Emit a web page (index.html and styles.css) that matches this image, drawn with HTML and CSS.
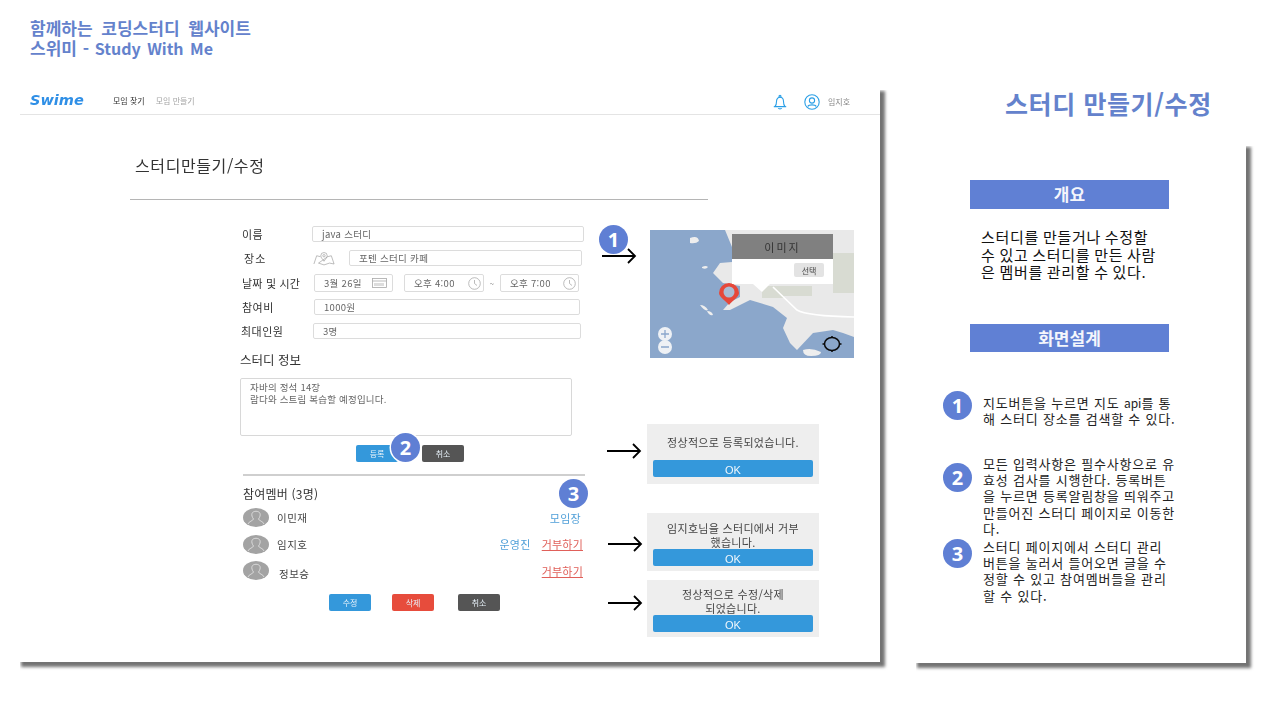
FILE: index.html
```html
<!DOCTYPE html>
<html lang="ko">
<head>
<meta charset="utf-8">
<title>스터디 만들기/수정</title>
<link rel="stylesheet" href="styles.css">
</head>
<body>
<div class="slide">
  <h1 class="slide-title">함께하는 코딩스터디 웹사이트<br><span class="line-two">스위미 - <span class="latin">Study With Me</span></span></h1>

  <section class="card mock-card">
    <div class="mock">
      <header class="nav">
        <span class="logo">Swime</span>
        <span class="nav-link active">모임 찾기</span>
        <span class="nav-link">모임 만들기</span>
        <svg class="bell" width="16" height="16" viewBox="0 0 16 16" fill="none" stroke="#2b9fe6" stroke-width="1.1"><path d="M3 12.500c1-1 1.500-2.500 1.500-5C4.500 5 6 3.300 8 3.300S11.500 5 11.500 7.500c0 2.500.5 4 1.500 5z"/><circle cx="8" cy="2.300" r="1"/><path d="M1.800 12.700h12.400M6.200 14.300c.5.700 3.100.7 3.600 0"/></svg>
        <svg class="user" width="16" height="16" viewBox="0 0 16 16" fill="none" stroke="#2b9fe6" stroke-width="1.100"><circle cx="8" cy="8" r="7.200"/><circle cx="8" cy="6.500" r="2.600"/><path d="M3.800 12.500c1-2.200 7.400-2.200 8.400 0"/></svg>
        <span class="nav-user">임지호</span>
      </header>

      <h2 class="page-title">스터디만들기/수정</h2>
      <hr class="page-rule">

      <form class="form">
        <div class="row row-name"><span class="label">이름</span><span class="field grow">java 스터디</span></div>
        <div class="row row-place"><span class="label">장소</span>
          <svg class="map-ico" width="22" height="15" viewBox="0 0 24 16" fill="none" stroke="#9a9a9a" stroke-width=".7"><path d="M1 14l3-9 4 1M16 6l4-1 3 9-5-1-6 2-6-2z"/><path d="M12 11c-2-3-3.500-4-3.500-6a3.500 3.500 0 0 1 7 0c0 2-1.500 3-3.500 6z"/><circle cx="12" cy="5" r="1.300"/></svg>
          <span class="field grow">포텐 스터디 카페</span></div>
        <div class="row row-date"><span class="label">날짜 및 시간</span>
          <span class="field date">3월 26일
            <svg width="15" height="10" viewBox="0 0 15 10" fill="none" stroke="#a9a9a9" stroke-width=".8"><rect x=".5" y=".5" width="14" height="9"/><path d="M.5 3h14M3 5v3M5 5v3M7 5v3M9 5v3M11 5v3"/></svg></span>
          <span class="field time">오후 4:00
            <svg width="13" height="13" viewBox="0 0 13 13" fill="none" stroke="#a9a9a9" stroke-width=".8"><circle cx="6.500" cy="6.500" r="5.800"/><path d="M6.500 3v3.500l2.500 2"/></svg></span>
          <span class="tilde">~</span>
          <span class="field time">오후 7:00
            <svg width="13" height="13" viewBox="0 0 13 13" fill="none" stroke="#a9a9a9" stroke-width=".8"><circle cx="6.500" cy="6.500" r="5.800"/><path d="M6.500 3v3.500l2.500 2"/></svg></span>
        </div>
        <div class="row row-fee"><span class="label">참여비</span><span class="field grow">1000원</span></div>
        <div class="row row-max"><span class="label">최대인원</span><span class="field grow">3명</span></div>

        <h3 class="sub info-title">스터디 정보</h3>
        <div class="textarea">자바의 정석 14장<br>람다와 스트림 복습할 예정입니다.</div>

        <div class="btns btns-top">
          <span class="btn blue">등록</span>
          <span class="btn dark">취소</span>
        </div>
        <hr class="rule">

        <h3 class="sub members-title">참여멤버 (3명)</h3>
        <ul class="members">
          <li class="member">
            <svg class="avatar" width="26" height="19" viewBox="0 0 26 19"><ellipse cx="13" cy="9.500" rx="13" ry="9.500" fill="#a3a3a3"/><path d="M5 16c1-3 5-3 5.500-5C9 9 8.500 7 9 5.500c1-3 7-3 8 0 .5 1.500 0 3.500-1.500 5.500.5 2 4.500 2 5.500 5" fill="none" stroke="#e6e6e6" stroke-width=".8"/></svg>
            <span class="name">이민재</span><span class="role">모임장</span>
          </li>
          <li class="member">
            <svg class="avatar" width="26" height="19" viewBox="0 0 26 19"><ellipse cx="13" cy="9.500" rx="13" ry="9.500" fill="#a3a3a3"/><path d="M5 16c1-3 5-3 5.500-5C9 9 8.500 7 9 5.500c1-3 7-3 8 0 .5 1.500 0 3.500-1.500 5.500.5 2 4.500 2 5.500 5" fill="none" stroke="#e6e6e6" stroke-width=".8"/></svg>
            <span class="name">임지호</span><span class="role">운영진</span><span class="reject">거부하기</span>
          </li>
          <li class="member">
            <svg class="avatar" width="26" height="19" viewBox="0 0 26 19"><ellipse cx="13" cy="9.500" rx="13" ry="9.500" fill="#a3a3a3"/><path d="M5 16c1-3 5-3 5.500-5C9 9 8.500 7 9 5.500c1-3 7-3 8 0 .5 1.500 0 3.500-1.500 5.500.5 2 4.500 2 5.500 5" fill="none" stroke="#e6e6e6" stroke-width=".8"/></svg>
            <span class="name name-low">정보승</span><span class="reject">거부하기</span>
          </li>
        </ul>
        <div class="btns btns-bottom">
          <span class="btn blue">수정</span>
          <span class="btn red">삭제</span>
          <span class="btn dark">취소</span>
        </div>
      </form>
    </div>
  </section>

  <div class="map">
    <svg width="204" height="128" viewBox="0 0 204 128">
      <rect width="204" height="128" fill="#8ba7cb"/>
      <path d="M75 0l7 17v15l-12 1-7 10 10 10 17 3v11l-10 5-7 8 7 0 20-10 23 7 14 11-4 10 7 15 7 7 16-17 20-3 10 3 11 4V0z" fill="#e9e9e9"/>
      <path d="M183 23h21v40h-21zM112 56h22v12h-22zM134 56h28v10h-28z" fill="#d8dbd2"/>
      <path d="M123 57l24 23q10 6 57 7" fill="none" stroke="#fff" stroke-width="1.600"/>
      <path d="M40 8q8-3 9 3q-3 3-9 2zM52 37q4-2 6 0q-2 3-6 1zM50 75q5 0 8 5q-3 2-8-5zM57 81q5 0 6 4q-4 1-6-4zM153 120q8-3 18 2q0 4-10 4q-8 0-8-6z" fill="#eeeeee"/>
      <circle cx="15" cy="104" r="7" fill="#eef1f5"/><circle cx="15" cy="117" r="7" fill="#eef1f5"/>
      <path d="M11 104h8M15 100v8M11 117h8" stroke="#8ba7cb" stroke-width="1.300"/>
      <ellipse cx="182" cy="114" rx="7.500" ry="6.500" fill="none" stroke="#0a0a0a" stroke-width="1.500"/>
      <path d="M182 106v2M182 120v2M172.500 114h2M189.500 114h2" stroke="#0a0a0a" stroke-width="1.500"/>
      <path d="M79 75c-3-4-10-8-10-12a10 10 0 0 1 20 0c0 4-7 8-10 12z" fill="#e6483a"/>
      <circle cx="79" cy="62" r="5.500" fill="#a9bcd4"/>
      <path d="M103 54h17l-8 8z" fill="#fff"/>
    </svg>
    <div class="popup">
      <div class="popup-head">이미지</div>
      <div class="popup-body"><span class="popup-btn">선택</span></div>
    </div>
  </div>

  <div class="alert alert-a"><p>정상적으로 등록되었습니다.</p><span class="ok">OK</span></div>
  <div class="alert alert-b"><p>임지호님을 스터디에서 거부<br>했습니다.</p><span class="ok">OK</span></div>
  <div class="alert alert-c"><p>정상적으로 수정/삭제<br>되었습니다.</p><span class="ok">OK</span></div>

  <svg class="arrow arrow-1" width="36" height="16" viewBox="0 0 36 16" fill="none" stroke="#000" stroke-width="1.800"><path d="M1 8h33M27 1l7 7-7 7"/></svg>
  <svg class="arrow arrow-2" width="36" height="16" viewBox="0 0 36 16" fill="none" stroke="#000" stroke-width="1.800"><path d="M1 8h33M27 1l7 7-7 7"/></svg>
  <svg class="arrow arrow-3" width="36" height="16" viewBox="0 0 36 16" fill="none" stroke="#000" stroke-width="1.800"><path d="M1 8h33M27 1l7 7-7 7"/></svg>
  <svg class="arrow arrow-4" width="36" height="16" viewBox="0 0 36 16" fill="none" stroke="#000" stroke-width="1.800"><path d="M1 8h33M27 1l7 7-7 7"/></svg>

  <span class="badge pin-1">1</span>
  <span class="badge pin-2">2</span>
  <span class="badge pin-3">3</span>

  <h2 class="side-title">스터디 만들기/수정</h2>

  <aside class="card side-card">
    <h3 class="bar bar-one">개요</h3>
    <p class="summary">스터디를 만들거나 수정할<br>수 있고 스터디를 만든 사람<br>은 멤버를 관리할 수 있다.</p>
    <h3 class="bar bar-two">화면설계</h3>
    <div class="note note-1"><span class="badge">1</span><p>지도버튼을 누르면 지도 <span class="api">api</span>를 통<br>해 스터디 장소를 검색할 수 있다.</p></div>
    <div class="note note-2"><span class="badge">2</span><p>모든 입력사항은 필수사항으로 유<br>효성 검사를 시행한다. 등록버튼<br>을 누르면 등록알림창을 띄워주고<br>만들어진 스터디 페이지로 이동한<br>다.</p></div>
    <div class="note note-3"><span class="badge">3</span><p>스터디 페이지에서 스터디 관리<br>버튼을 눌러서 들어오면 글을 수<br>정할 수 있고 참여멤버들을 관리<br>할 수 있다.</p></div>
  </aside>
</div>
</body>
</html>
```

FILE: styles.css
```css
* { box-sizing: border-box; }
html, body { margin: 0; padding: 0; background: #fff; }
body { font-family: "Noto Sans CJK KR", "Noto Sans", sans-serif; color: #333; }
.slide { position: relative; width: 1280px; height: 720px; overflow: hidden; background: #fff; }
h1, h2, h3, p, ul { margin: 0; padding: 0; font-weight: 400; }
hr { border: 0; margin: 0; }
ul { list-style: none; }

.slide-title { position: absolute; left: 30px; top: 18px; font-size: 17px; line-height: 20px; font-weight: 700; color: #6482cc; word-spacing: 4px; white-space: nowrap; }
.line-two { word-spacing: 1px; }
.latin { font-size: 16px; word-spacing: 2px; }

.card { position: absolute; background: #fff; box-shadow: 3px 3px 3px 2px rgba(0,0,0,.55); clip-path: inset(0 -12px -12px 0); }
.mock-card { left: 20px; top: 90px; width: 860px; height: 572px; }
.mock { height: 100%; filter: blur(.35px); }

.nav { display: flex; align-items: center; height: 25px; padding: 0 30px 0 10px; border-bottom: 1px solid #e4e4e4; }
.logo { width: 83px; padding-bottom: 4px; font: italic 700 14.500px "DejaVu Sans", sans-serif; color: #2f8fe6; }
.nav-link { padding-bottom: 3px; font-size: 8px; color: #a5a5a5; margin-right: 11px; }
.nav-link.active { color: #333; }
.bell { margin-left: auto; }
.user { margin-left: 16px; }
.nav-user { margin-left: 8px; padding-bottom: 1px; font-size: 8px; color: #888; }

.page-title { margin: 40px 0 0 115px; font-size: 16px; line-height: 20px; letter-spacing: .6px; color: #333; }
.page-rule { margin: 24px 0 0 110px; width: 578px; height: 1px; background: #b5b5b5; }

.form { margin: 26px 0 0 220px; width: 346px; }
.row { display: flex; align-items: center; height: 16px; margin-bottom: 8px; }
.label { font-size: 11px; color: #333; letter-spacing: .5px; white-space: nowrap; }
.field { display: flex; align-items: center; height: 100%; padding-left: 9px; border: 1px solid #dcdcdc; border-radius: 2px; font-size: 9.500px; letter-spacing: .3px; color: #666; white-space: nowrap; }
.grow { flex: 1; }
.row-name { padding: 0 2px; }
.row-name .label { width: 70px; }
.row-place { padding: 0 4px 0 4px; }
.row-place .label { width: 69px; letter-spacing: 1.200px; }
.map-ico { margin-right: 14px; }
.row-date { height: 18px; margin-bottom: 7px; padding: 0 6px 0 2px; }
.row-date .label { width: 72px; letter-spacing: .2px; }
.date { width: 79px; justify-content: space-between; padding: 0 5px 0 9px; }
.time { width: 80px; margin-left: 11px; justify-content: space-between; padding: 0 2px 0 9px; }
.time + .tilde + .time { margin-left: 0; width: 79px; }
.tilde { width: 16px; text-align: center; font-size: 8px; color: #666; }
.row-fee { padding: 0 6px 0 2px; }
.row-fee .label { width: 72px; }
.row-max { padding: 0 5px 0 1px; }
.row-max .label { width: 72px; }

.sub { font-size: 11px; line-height: 16px; color: #333; }
.info-title { margin-top: 13px; font-size: 12.500px; }
.textarea { margin-top: 10px; width: 332px; height: 58px; padding: 2px 9px; border: 1px solid #d8d8d8; border-radius: 2px; font-size: 9.500px; letter-spacing: .2px; line-height: 12px; color: #666; }

.btns { display: flex; }
.btn { display: flex; align-items: center; justify-content: center; width: 42px; height: 17px; border-radius: 2px; font-size: 8px; color: #e8f2fa; }
.blue { background: #3498db; }
.dark { background: #555; }
.red { background: #e74c3c; }
.btns-top { margin: 9px 0 0 116px; gap: 24px; }
.rule { margin: 12px 0 0 3px; width: 342px; height: 2px; background: #cfcfcf; }
.members-title { margin: 10px 0 0 3px; font-size: 12px; letter-spacing: .2px; }
.members { margin: 6px 0 0 3px; width: 340px; }
.member { display: flex; align-items: center; height: 19px; margin-bottom: 7.500px; }
.member:last-child { margin-bottom: 0; }
.avatar { flex: none; }
.name { margin-left: 8px; font-size: 10.500px; letter-spacing: .5px; color: #444; }
.name-low { margin-left: 10px; padding-top: 6px; }
.role { margin-left: auto; font-size: 11px; letter-spacing: .3px; color: #4f9fd8; }
.role:last-child { margin-right: 2px; }
.reject { margin-left: 11px; font-size: 11px; letter-spacing: .2px; color: #e0605a; text-decoration: underline; }
.member:last-child .reject { margin-left: auto; }
.btns-bottom { margin: 14px 0 0 89px; }
.btns-bottom .red { margin: 0 24px 0 21px; }

.map { position: absolute; left: 650px; top: 230px; width: 204px; height: 128px; filter: blur(.35px); }
.map svg { display: block; }
.popup { position: absolute; left: 82px; top: 4px; width: 101px; height: 50px; background: #fff; }
.popup-head { display: flex; align-items: center; justify-content: center; height: 25px; background: #808080; font-size: 11px; letter-spacing: 2px; color: #333; }
.popup-body { display: flex; justify-content: flex-end; padding: 4px 9px 0 0; }
.popup-btn { display: flex; align-items: center; justify-content: center; width: 30px; height: 14px; border-radius: 2px; background: #e3e3e3; font-size: 8px; color: #444; }

.alert { position: absolute; left: 647px; width: 172px; padding: 0 6px; background: #eee; text-align: center; filter: blur(.3px); white-space: nowrap; }
.alert p { font-size: 11px; line-height: 14px; letter-spacing: .3px; color: #444; }
.alert-a { top: 424px; height: 60px; padding-top: 11px; }
.alert-a p { margin-bottom: 11px; }
.alert-b { top: 513px; height: 58px; padding-top: 8px; }
.alert-c { top: 580px; height: 57px; padding-top: 7px; }
.ok { display: block; height: 17px; border-radius: 2px; background: #3498db; font: 11px/21px "Liberation Sans", sans-serif; color: #eef6fc; }

.arrow { position: absolute; }
.arrow-1 { left: 601px; top: 248px; }
.arrow-2 { left: 606px; top: 443px; }
.arrow-3 { left: 607px; top: 536px; }
.arrow-4 { left: 607px; top: 595px; }

.badge { display: flex; align-items: center; justify-content: center; flex: none; width: 29px; height: 29px; border-radius: 50%; background: #5f7fd4; color: #fff; font: 700 20px "Open Sans", sans-serif; }
.pin-1, .pin-2, .pin-3 { position: absolute; }
.pin-1 { left: 599px; top: 225px; }
.pin-2 { left: 391px; top: 433px; box-shadow: 0 0 0 1.500px #fff; }
.pin-3 { left: 559px; top: 479px; }

.side-title { position: absolute; left: 1005px; top: 87px; font-size: 25px; line-height: 32px; letter-spacing: .6px; font-weight: 700; color: #6482cc; white-space: nowrap; }
.side-card { left: 916px; top: 146px; width: 330px; height: 517px; padding: 34px 0 0 54px; }
.bar { display: flex; align-items: center; justify-content: center; width: 199px; height: 29px; background: #6080d4; font-size: 17px; font-weight: 700; color: #f4f6fc; }
.bar-one { padding-bottom: 2px; }
.bar-two { height: 28px; }
.summary { margin: 19px 0 43px 11px; font-size: 15px; line-height: 17.500px; letter-spacing: .7px; word-spacing: -1px; color: #111; white-space: nowrap; }
.note { display: flex; margin-left: -27px; white-space: nowrap; }
.note p { margin-left: 11px; font-size: 13px; line-height: 16.200px; letter-spacing: .8px; color: #222; }
.api { font-size: 12px; letter-spacing: 0; }
.note-1 { margin-top: 43px; }
.note-1 .badge { margin-top: -4px; }
.note-2 { margin-top: 29px; }
.note-2 .badge { margin-top: 7px; }
.note-3 { margin-top: 2px; }
```
